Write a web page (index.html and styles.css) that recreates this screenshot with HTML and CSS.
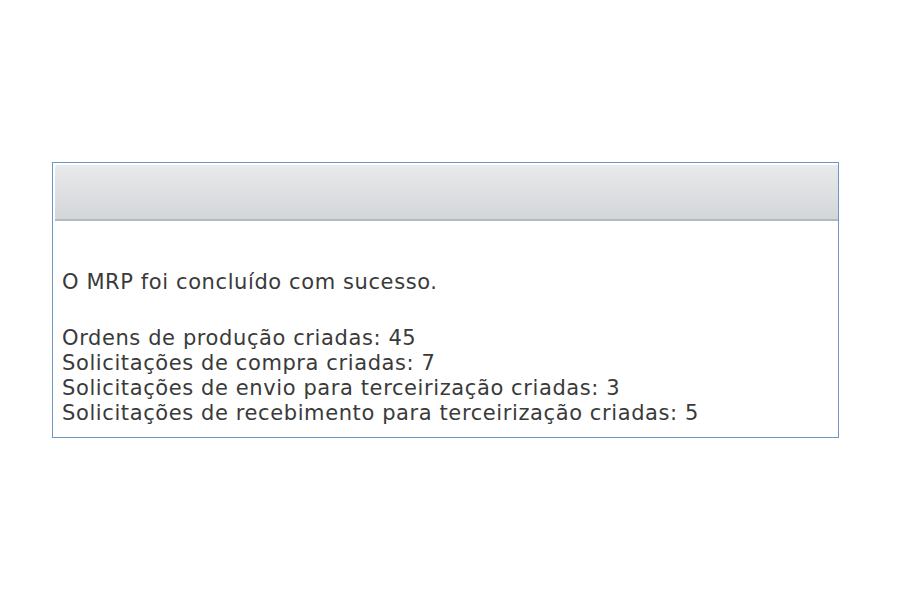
FILE: index.html
```html
<!DOCTYPE html>
<html>
<head>
<meta charset="utf-8">
<link rel="stylesheet" href="styles.css">
</head>
<body>
<div class="page">
  <div class="panel">
    <div class="panel-head"></div>
    <div class="panel-body">
      <p class="msg">O MRP foi concluído com sucesso.</p>
      <p class="list">Ordens de produção criadas: 45<br>Solicitações de compra criadas: 7<br>Solicitações de envio para terceirização criadas: 3<br>Solicitações de recebimento para terceirização criadas: 5</p>
    </div>
  </div>
</div>
</body>
</html>
```

FILE: styles.css
```css
html, body {
  margin: 0;
  padding: 0;
  background: #ffffff;
}
.page {
  padding: 162px 0 0 52px;
}
.panel {
  width: 785px;
  border: 1px solid #6f94c6;
  background: #fff;
}
.panel-head {
  margin: 2px 0 0 2px;
  height: 54px;
  border-radius: 3px 0 0 0;
  background: linear-gradient(#e9eaec, #d3d6d9);
  border-bottom: 2px solid #b3b8bd;
}
.panel-body {
  padding: 49px 0 11px 9px;
  font-family: "DejaVu Sans", Verdana, sans-serif;
  font-size: 21px;
  line-height: 25px;
  letter-spacing: 0.6px;
  color: #3a3a3a;
}
.msg {
  margin: 0 0 30.5px 0;
}
.list {
  margin: 0;
}
```
